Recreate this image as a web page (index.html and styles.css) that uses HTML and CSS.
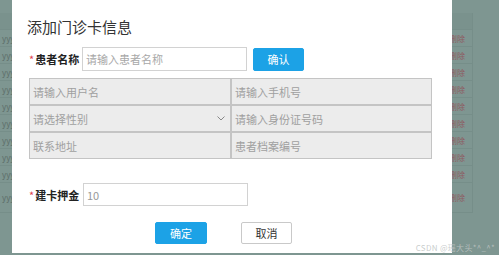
FILE: index.html
```html
<!DOCTYPE html>
<html lang="zh-CN">
<head>
    <meta charset="UTF-8">
    <meta name="viewport" content="width=device-width, initial-scale=1.0">
    <title>添加门诊卡信息</title>
    <link rel="stylesheet" href="styles.css">
</head>
<body>
    <!-- page behind the dialog -->
    <div class="page">
        <div class="list">
            <div class="list-row list-head"><span class="col-name"></span><span class="col-op"></span></div>
            <div class="list-row"><span class="col-name">yyy</span><span class="col-op">删除</span></div>
            <div class="list-row"><span class="col-name">yyy</span><span class="col-op">删除</span></div>
            <div class="list-row"><span class="col-name">yyy</span><span class="col-op">删除</span></div>
            <div class="list-row"><span class="col-name">yyy</span><span class="col-op">删除</span></div>
            <div class="list-row"><span class="col-name">yyy</span><span class="col-op">删除</span></div>
            <div class="list-row"><span class="col-name">yyy</span><span class="col-op">删除</span></div>
            <div class="list-row"><span class="col-name">yyy</span><span class="col-op">删除</span></div>
            <div class="list-row"><span class="col-name">yyy</span><span class="col-op">删除</span></div>
            <div class="list-row"><span class="col-name">yyy</span><span class="col-op">删除</span></div>
            <div class="list-row list-row-tall"><span class="col-name">yyy</span><span class="col-op">删除</span></div>
        </div>
    </div>

    <div class="modal">
        <h1 class="modal-title">添加门诊卡信息</h1>

        <div class="form-row">
            <label class="form-label"><span class="required">*</span>患者名称</label>
            <input class="form-input" type="text" placeholder="请输入患者名称">
            <button class="btn btn-primary btn-small">确认</button>
        </div>

        <div class="info-grid">
            <input class="cell" type="text" placeholder="请输入用户名">
            <input class="cell" type="text" placeholder="请输入手机号">
            <div class="cell cell-select">
                <span>请选择性别</span>
                <svg class="chevron" width="8" height="5" viewBox="0 0 8 5"><path d="M0.5 0.5 L4 4 L7.5 0.5" fill="none" stroke="#888" stroke-width="1"/></svg>
            </div>
            <input class="cell" type="text" placeholder="请输入身份证号码">
            <input class="cell" type="text" placeholder="联系地址">
            <input class="cell" type="text" placeholder="患者档案编号">
        </div>

        <div class="form-row deposit-row">
            <label class="form-label"><span class="required">*</span>建卡押金</label>
            <input class="form-input" type="text" value="10">
        </div>

        <div class="modal-footer">
            <button class="btn btn-primary">确定</button>
            <button class="btn btn-default">取消</button>
        </div>
    </div>

    <div class="watermark">CSDN @瑶大头*^_^*</div>
</body>
</html>
```

FILE: styles.css
```css
body {
    margin: 0;
    width: 499px;
    height: 255px;
    overflow: hidden;
    position: relative;
    background-color: #7e9691;
    font-family: "Noto Sans CJK SC", "Liberation Sans", sans-serif;
}
.page {
    padding-top: 13px;
}
.list {
    width: 473px;
}
.list-row {
    display: flex;
    justify-content: space-between;
    align-items: center;
    height: 17px;
    border-bottom: 1px solid #768e89;
    box-sizing: border-box;
    font-size: 8px;
}
.list-head {
    background-color: #7a928d;
}
.list-row-tall {
    height: 30px;
}
.col-name {
    color: #5d6e6a;
    padding-left: 2px;
}
.col-op {
    color: #8e5c62;
    width: 21px;
    height: 100%;
    line-height: 17px;
    border-left: 1px solid #768e89;
    border-right: 1px solid #768e89;
    text-indent: -2px;
    overflow: hidden;
    white-space: nowrap;
}
.list-row-tall .col-op {
    line-height: 30px;
}

/* dialog */
.modal {
    position: absolute;
    left: 12px;
    top: 0;
    width: 440px;
    height: 253px;
    box-sizing: border-box;
    background-color: #fff;
    padding: 15px 17px 0 17px;
}
.modal-title {
    margin: 0 0 8px -2px;
    font-size: 15px;
    font-weight: normal;
    line-height: 24px;
    color: #333;
}
.form-row {
    display: flex;
    align-items: center;
    height: 24px;
}
.form-label {
    width: 53px;
    font-size: 11px;
    font-weight: bold;
    color: #222;
    white-space: nowrap;
}
.required {
    color: #e0424f;
    font-weight: normal;
    margin-right: 1px;
}
.form-input {
    width: 165px;
    height: 24px;
    box-sizing: border-box;
    border: 1px solid #d2d2d2;
    padding: 0 3px;
    font-family: inherit;
    font-size: 11px;
    color: #999;
    outline: none;
}
.form-input::placeholder {
    color: #a8a8a8;
}
.btn {
    height: 22px;
    width: 52px;
    box-sizing: border-box;
    border-radius: 2px;
    font-family: inherit;
    font-size: 11px;
    padding: 0;
    cursor: pointer;
}
.btn-small {
    width: 51px;
    height: 23px;
    margin-left: 6px;
}
.btn-primary {
    background-color: #1ca2e6;
    border: 1px solid #1ca2e6;
    color: #fff;
}
.btn-default {
    background-color: #fff;
    border: 1px solid #c9c9c9;
    color: #333;
    width: 51px;
}
.info-grid {
    margin-top: 7px;
    width: 403px;
    display: grid;
    grid-template-columns: 202px 201px;
}
.cell {
    height: 27px;
    box-sizing: border-box;
    border: 1px solid #c4c4c4;
    background-color: #ececec;
    padding: 0 3px;
    font-family: inherit;
    font-size: 11px;
    color: #999;
    outline: none;
}
.cell::placeholder {
    color: #a0a0a0;
}
.cell-select {
    display: flex;
    align-items: center;
    justify-content: space-between;
    color: #a0a0a0;
}
.chevron {
    margin-right: 2px;
}
.deposit-row {
    margin-top: 24px;
    height: 23px;
}
.deposit-row .form-input {
    height: 23px;
    margin-left: 1px;
}
.modal-footer {
    display: flex;
    gap: 34px;
    margin-top: 16px;
    padding-left: 126px;
}
.watermark {
    position: absolute;
    right: 4px;
    bottom: 2px;
    font-size: 8px;
    letter-spacing: 0.3px;
    color: rgba(190, 196, 195, 0.85);
}
```
